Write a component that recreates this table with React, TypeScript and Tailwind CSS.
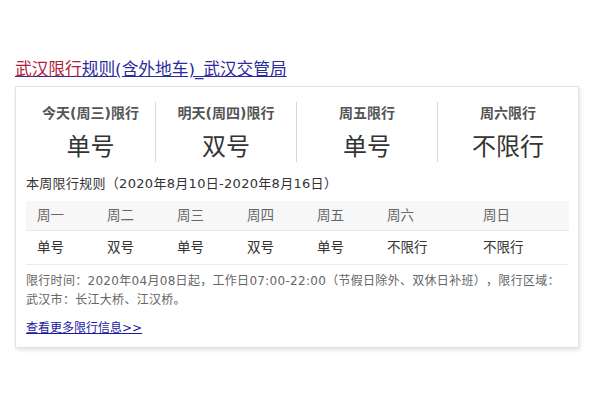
import React from "react";

const top = [
  { h: "今天(周三)限行", v: "单号" },
  { h: "明天(周四)限行", v: "双号" },
  { h: "周五限行", v: "单号" },
  { h: "周六限行", v: "不限行" },
];

const days = ["周一", "周二", "周三", "周四", "周五", "周六", "周日"];
const vals = ["单号", "双号", "单号", "双号", "单号", "不限行", "不限行"];
const widths = ["w-[70px]", "w-[70px]", "w-[70px]", "w-[70px]", "w-[70px]", "w-[96px]", "flex-1"];

export default function App() {
  return (
    <div className="w-[600px] h-[400px] bg-white pt-[58px] px-[15px] font-['DejaVu_Sans','Noto_Sans_CJK_SC',sans-serif] [text-spacing-trim:space-all]">
      <a className="block text-[16.7px] leading-[22px] underline w-fit text-[#2b2ba0]" href="#">
        <span className="text-[#b0203a]">武汉限行</span>规则(含外地车)_武汉交管局
      </a>
      <div className="mt-[6px] w-[564px] border border-[#e3e3e3] shadow-[1px_2px_4px_rgba(0,0,0,0.12)] pb-[9px]">
        <div className="flex pt-[15px]">
          {top.map((t, i) => (
            <div
              key={i}
              className={
                (i === 0 ? "w-[140px] pl-[10px] " : i === 3 ? "flex-1 " : "w-[141px] ") +
                (i < 3 ? "border-r border-[#d8d8d8] " : "") +
                "h-[60px] flex flex-col items-center"
              }
            >
              <div className="text-[14px] leading-[22px] font-bold text-[#555]">{t.h}</div>
              <div className="mt-[8px] text-[24px] leading-[30px] text-[#333]">{t.v}</div>
            </div>
          ))}
        </div>
        <div className="px-[10px]">
          <div className="mt-[12px] text-[13px] leading-[20px] text-[#333] tracking-[0.3px]">
            本周限行规则（2020年8月10日-2020年8月16日）
          </div>
          <div className="mt-[7px] w-[543px]">
            <div className="flex h-[30px] items-center bg-[#f7f7f7] border-b border-[#e8e8e8] text-[13.5px] text-[#666]">
              {days.map((d, i) => (
                <div key={i} className={widths[i] + " pl-[11px]"}>{d}</div>
              ))}
            </div>
            <div className="flex h-[34px] items-center border-b border-[#ececec] text-[13.5px] text-[#333]">
              {vals.map((d, i) => (
                <div key={i} className={widths[i] + " pl-[11px]"}>{d}</div>
              ))}
            </div>
          </div>
          <div className="mt-[7px] text-[12px] leading-[19px] text-[#666] tracking-[0.3px]">
            限行时间：2020年04月08日起，工作日07:00-22:00（节假日除外、双休日补班），限行区域：
            <br />
            武汉市：长江大桥、江汉桥。
          </div>
          <a className="block mt-[8px] text-[12px] leading-[20px] underline text-[#1a1aa0] w-fit" href="#">
            查看更多限行信息&gt;&gt;
          </a>
        </div>
      </div>
    </div>
  );
}
